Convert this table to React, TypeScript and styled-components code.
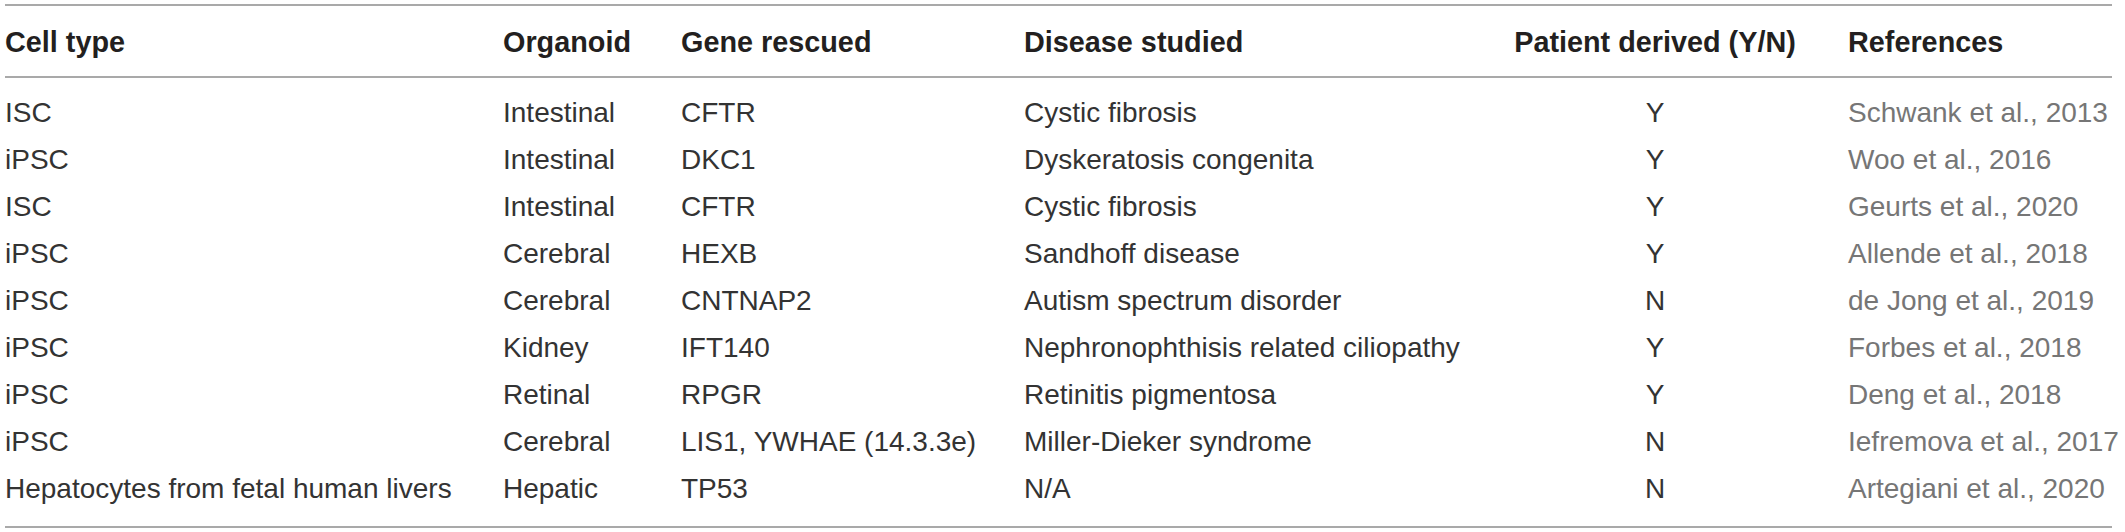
import React from "react";
import styled, { createGlobalStyle } from "styled-components";

const GlobalStyle = createGlobalStyle`
  html, body {
    margin: 0;
    padding: 0;
    background: #ffffff;
  }
  body {
    font-family: "Liberation Sans", Arial, Helvetica, sans-serif;
  }
`;

const Page = styled.div`
  padding: 4px 0 0 5px;
`;

const Table = styled.table`
  width: 2107px;
  table-layout: fixed;
  border-collapse: collapse;
  border-top: 2px solid #a9a9a9;
  border-bottom: 2px solid #a9a9a9;
`;

const HeadRow = styled.tr`
  border-bottom: 2px solid #a9a9a9;
`;

type AlignProps = { $align?: "left" | "center" };

const HeadCell = styled.th<AlignProps>`
  padding: 20px 0 18px 0;
  font-size: 28.8px;
  line-height: 32px;
  font-weight: 700;
  color: #231f20;
  text-align: ${(p) => p.$align ?? "left"};
  white-space: nowrap;
`;

const BodyRow = styled.tr`
  &:first-child > td {
    padding-top: 11px;
  }
  &:last-child > td {
    padding-bottom: 14px;
  }
`;

const Cell = styled.td<AlignProps & { $muted?: boolean }>`
  padding: 0;
  font-size: 28px;
  line-height: 47px;
  font-weight: 400;
  color: ${(p) => (p.$muted ? "#767676" : "#333333")};
  text-align: ${(p) => p.$align ?? "left"};
  white-space: nowrap;
  vertical-align: top;
`;

const columns = [
  { label: "Cell type", width: 498 },
  { label: "Organoid", width: 178 },
  { label: "Gene rescued", width: 343 },
  { label: "Disease studied", width: 438 },
  { label: "Patient derived (Y/N)", width: 386, align: "center" as const },
  { label: "References", width: 264 },
];

const rows = [
  ["ISC", "Intestinal", "CFTR", "Cystic fibrosis", "Y", "Schwank et al., 2013"],
  ["iPSC", "Intestinal", "DKC1", "Dyskeratosis congenita", "Y", "Woo et al., 2016"],
  ["ISC", "Intestinal", "CFTR", "Cystic fibrosis", "Y", "Geurts et al., 2020"],
  ["iPSC", "Cerebral", "HEXB", "Sandhoff disease", "Y", "Allende et al., 2018"],
  ["iPSC", "Cerebral", "CNTNAP2", "Autism spectrum disorder", "N", "de Jong et al., 2019"],
  ["iPSC", "Kidney", "IFT140", "Nephronophthisis related ciliopathy", "Y", "Forbes et al., 2018"],
  ["iPSC", "Retinal", "RPGR", "Retinitis pigmentosa", "Y", "Deng et al., 2018"],
  ["iPSC", "Cerebral", "LIS1, YWHAE (14.3.3e)", "Miller-Dieker syndrome", "N", "Iefremova et al., 2017"],
  ["Hepatocytes from fetal human livers", "Hepatic", "TP53", "N/A", "N", "Artegiani et al., 2020"],
];

export default function App() {
  return (
    <>
      <GlobalStyle />
      <Page>
        <Table>
          <colgroup>
            {columns.map((c) => (
              <col key={c.label} style={{ width: c.width }} />
            ))}
          </colgroup>
          <thead>
            <HeadRow>
              {columns.map((c) => (
                <HeadCell key={c.label} $align={c.align}>
                  {c.label}
                </HeadCell>
              ))}
            </HeadRow>
          </thead>
          <tbody>
            {rows.map((r, i) => (
              <BodyRow key={i}>
                <Cell>{r[0]}</Cell>
                <Cell>{r[1]}</Cell>
                <Cell>{r[2]}</Cell>
                <Cell>{r[3]}</Cell>
                <Cell $align="center">{r[4]}</Cell>
                <Cell $muted>{r[5]}</Cell>
              </BodyRow>
            ))}
          </tbody>
        </Table>
      </Page>
    </>
  );
}
